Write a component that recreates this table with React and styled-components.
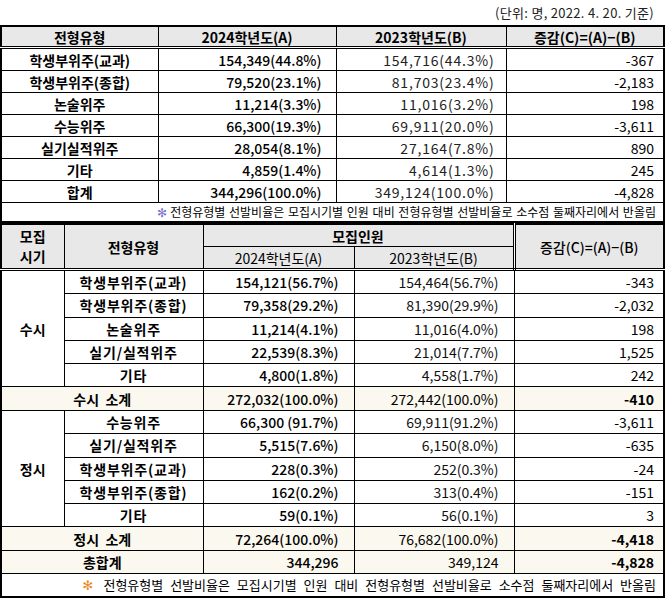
import React from "react";
import styled, { createGlobalStyle } from "styled-components";

const GlobalStyle = createGlobalStyle`
  body {
    margin: 0;
    background: #ffffff;
    font-family: "Noto Sans CJK KR", "Noto Sans", sans-serif;
    color: #000;
  }
`;

const Page = styled.div`
  width: 663px;
`;

const Caption = styled.div`
  height: 25px;
  text-align: right;
  padding-right: 9px;
  font-size: 13px;
  line-height: 25px;
  color: #222;
  letter-spacing: 0.3px;
  box-sizing: border-box;
`;

const Table = styled.table`
  width: 663px;
  border-collapse: collapse;
  table-layout: fixed;
  border: 2px solid #000;
  font-size: 14px;
`;

const Cell = styled.td`
  border: 1px solid #000;
  padding: 0 ${(p) => p.$pad || 10}px;
  height: ${(p) => p.$h || 21}px;
  line-height: ${(p) => p.$lh || 1};
  text-align: ${(p) => p.$align || "center"};
  font-weight: ${(p) => p.$w || 400};
  letter-spacing: ${(p) => p.$ls || 0}px;
  color: ${(p) => p.$color || "#000"};
  white-space: nowrap;
  overflow: hidden;
`;

const HeadCell = styled(Cell).attrs({ as: "th" })`
  background: #e8e8e8;
  border-bottom: ${(p) => (p.$double ? "3px double #000" : "1px solid #000")};
`;

const SumRow = styled.tr`
  background: ${(p) => (p.$tint ? "#fbf8ef" : "transparent")};
`;

const Note = styled.td`
  border: 1px solid #000;
  height: ${(p) => p.$h}px;
  text-align: right;
  padding-right: 7px;
  font-size: ${(p) => p.$size}px;
  word-spacing: ${(p) => p.$ws}px;
  line-height: 1;
  white-space: nowrap;
`;

const Star = styled.span`
  font-family: "DejaVu Sans", sans-serif;
  color: ${(p) => p.$color};
  margin-right: 3px;
`;

const overall = [
  ["학생부위주(교과)", "154,349(44.8%)", "154,716(44.3%)", "-367"],
  ["학생부위주(종합)", "79,520(23.1%)", "81,703(23.4%)", "-2,183"],
  ["논술위주", "11,214(3.3%)", "11,016(3.2%)", "198"],
  ["수능위주", "66,300(19.3%)", "69,911(20.0%)", "-3,611"],
  ["실기실적위주", "28,054(8.1%)", "27,164(7.8%)", "890"],
  ["기타", "4,859(1.4%)", "4,614(1.3%)", "245"],
  ["합계", "344,296(100.0%)", "349,124(100.0%)", "-4,828"],
];

const susi = [
  ["학생부위주(교과)", "154,121(56.7%)", "154,464(56.7%)", "-343"],
  ["학생부위주(종합)", "79,358(29.2%)", "81,390(29.9%)", "-2,032"],
  ["논술위주", "11,214(4.1%)", "11,016(4.0%)", "198"],
  ["실기/실적위주", "22,539(8.3%)", "21,014(7.7%)", "1,525"],
  ["기타", "4,800(1.8%)", "4,558(1.7%)", "242"],
];

const jeongsi = [
  ["수능위주", "66,300 (91.7%)", "69,911(91.2%)", "-3,611"],
  ["실기/실적위주", "5,515(7.6%)", "6,150(8.0%)", "-635"],
  ["학생부위주(교과)", "228(0.3%)", "252(0.3%)", "-24"],
  ["학생부위주(종합)", "162(0.2%)", "313(0.4%)", "-151"],
  ["기타", "59(0.1%)", "56(0.1%)", "3"],
];

const noteText =
  "전형유형별 선발비율은 모집시기별 인원 대비 전형유형별 선발비율로 소수점 둘째자리에서 반올림";

const GroupRows = ({ label, rows }) =>
  rows.map((r, i) => (
    <tr key={r[0] + i}>
      {i === 0 && (
        <Cell rowSpan={rows.length} $w={700}>
          {label}
        </Cell>
      )}
      <Cell $w={700} $ls={0.8} $h={22.3}>
        {r[0]}
      </Cell>
      <Cell $align="right" $pad={15} $w={500}>
        {r[1]}
      </Cell>
      <Cell $align="right" $pad={15} $color="#111">
        {r[2]}
      </Cell>
      <Cell $align="right" $pad={9}>
        {r[3]}
      </Cell>
    </tr>
  ));

const App = () => {
  return (
    <Page>
      <GlobalStyle />
      <Caption>(단위: 명, 2022. 4. 20. 기준)</Caption>

      <Table>
        <colgroup>
          <col style={{ width: 157 }} />
          <col style={{ width: 178 }} />
          <col style={{ width: 170 }} />
          <col style={{ width: 158 }} />
        </colgroup>
        <thead>
          <tr>
            <HeadCell $w={700} $double $h={19}>전형유형</HeadCell>
            <HeadCell $w={700} $double $h={19}>2024학년도(A)</HeadCell>
            <HeadCell $w={700} $double $h={19}>2023학년도(B)</HeadCell>
            <HeadCell $w={700} $double $h={19}>증감(C)=(A)−(B)</HeadCell>
          </tr>
        </thead>
        <tbody>
          {overall.map((r) => (
            <tr key={r[0]}>
              <Cell $w={700}>{r[0]}</Cell>
              <Cell $align="right" $pad={14} $w={500}>
                {r[1]}
              </Cell>
              <Cell $align="right" $pad={11} $ls={0.8} $color="#222">
                {r[2]}
              </Cell>
              <Cell $align="right" $pad={9}>
                {r[3]}
              </Cell>
            </tr>
          ))}
          <tr>
            <Note colSpan={4} $h={16} $size={12} $ws={1}>
              <Star $color="#7a6fd0">✻</Star>
              {noteText}
            </Note>
          </tr>
        </tbody>
      </Table>

      <Table>
        <colgroup>
          <col style={{ width: 63 }} />
          <col style={{ width: 139 }} />
          <col style={{ width: 151 }} />
          <col style={{ width: 160 }} />
          <col style={{ width: 150 }} />
        </colgroup>
        <thead>
          <tr>
            <HeadCell rowSpan={2} $w={700} $double $lh={1.4}>
              모집
              <br />
              시기
            </HeadCell>
            <HeadCell rowSpan={2} $w={700} $double>전형유형</HeadCell>
            <HeadCell colSpan={2} $w={700}>모집인원</HeadCell>
            <HeadCell rowSpan={2} $w={500} $double style={{ borderLeft: "3px double #000" }}>
              증감(C)=(A)−(B)
            </HeadCell>
          </tr>
          <tr>
            <HeadCell $double>2024학년도(A)</HeadCell>
            <HeadCell $double>2023학년도(B)</HeadCell>
          </tr>
        </thead>
        <tbody>
          <GroupRows label="수시" rows={susi} />
          <SumRow $tint>
            <Cell colSpan={2} $w={700} $h={22.5}>
              수시&nbsp;&nbsp;소계
            </Cell>
            <Cell $align="right" $pad={15} $w={500}>272,032(100.0%)</Cell>
            <Cell $align="right" $pad={15}>272,442(100.0%)</Cell>
            <Cell $align="right" $pad={9} $w={700}>-410</Cell>
          </SumRow>
          <GroupRows label="정시" rows={jeongsi} />
          <SumRow $tint>
            <Cell colSpan={2} $w={700} $h={22.5}>
              정시&nbsp;&nbsp;소계
            </Cell>
            <Cell $align="right" $pad={15} $w={500}>72,264(100.0%)</Cell>
            <Cell $align="right" $pad={15}>76,682(100.0%)</Cell>
            <Cell $align="right" $pad={9} $w={700}>-4,418</Cell>
          </SumRow>
          <SumRow $tint>
            <Cell colSpan={2} $w={700} $h={22.5}>
              총합계
            </Cell>
            <Cell $align="right" $pad={15} $w={500}>344,296</Cell>
            <Cell $align="right" $pad={15}>349,124</Cell>
            <Cell $align="right" $pad={9} $w={700}>-4,828</Cell>
          </SumRow>
          <tr>
            <Note colSpan={5} $h={20} $size={13} $ws={4}>
              <Star $color="#e8891c">✻</Star> {noteText}
            </Note>
          </tr>
        </tbody>
      </Table>
    </Page>
  );
};

export default App;
